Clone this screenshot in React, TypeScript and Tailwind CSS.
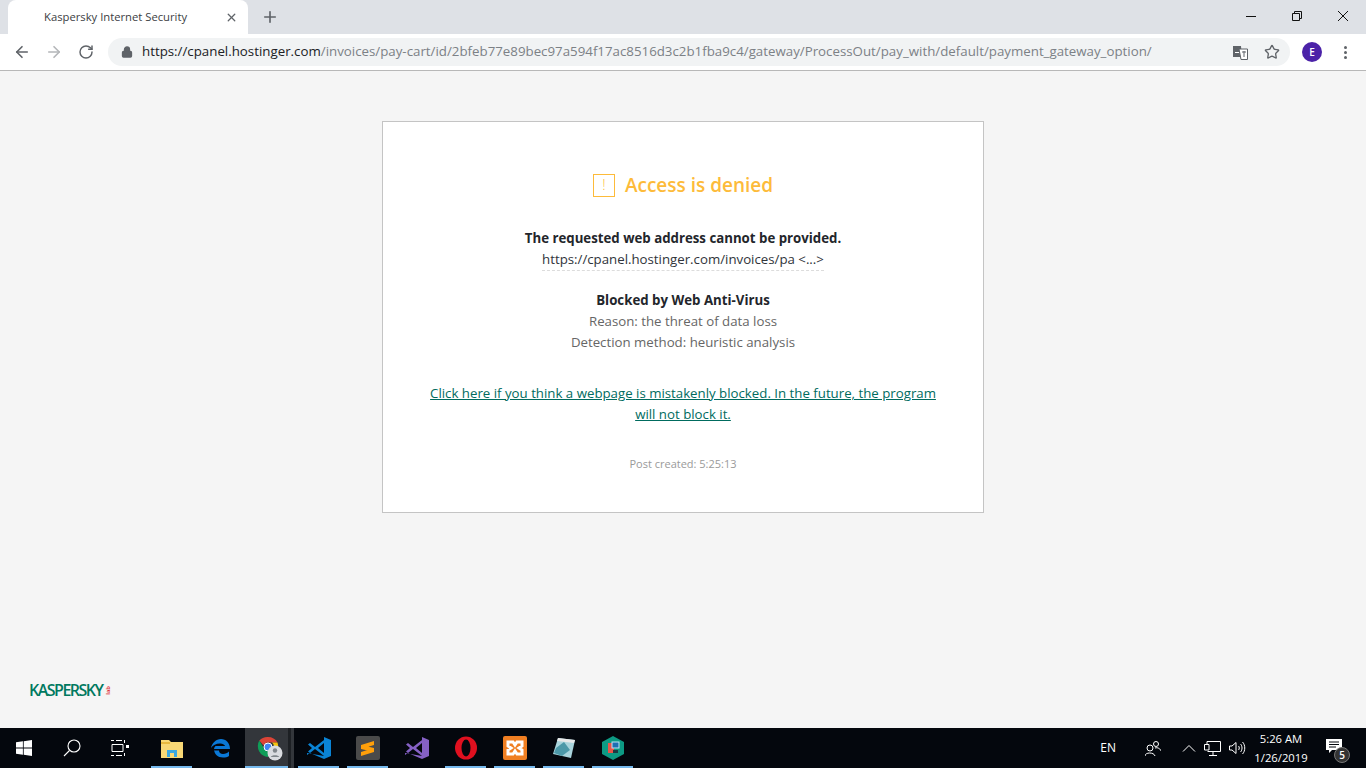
import { ArrowLeft, ArrowRight, Lock, Plus, RotateCw, Star, X } from 'lucide-react';

const ui = "font-['Open_Sans','Noto_Sans',sans-serif]";

function TaskbarButton({ open, active, children }: { open?: boolean; active?: boolean; children: React.ReactNode }) {
  return (
    <div className={`relative flex h-10 w-[49px] items-center justify-center ${active ? 'bg-[#33363b]' : ''}`}>
      {children}
      {active && <div className="absolute inset-y-0 right-[3px] w-[3px] bg-[#1d2024]" />}
      {open && <div className={`absolute bottom-0 h-[2px] bg-[#76b9ed] ${active ? 'left-0 right-[6px]' : 'inset-x-[4px]'}`} />}
    </div>
  );
}

function WindowsLogo() {
  return (
    <svg width="16" height="16" viewBox="0 0 16 16" fill="#fff">
      <path d="M0 2.300 6.900 1.300V7.600H0ZM7.700 1.200 16 0V7.600H7.700ZM0 8.400H6.900V14.700L0 13.700ZM7.700 8.400H16V16L7.700 14.800Z" />
    </svg>
  );
}

function ChromeLogo() {
  return (
    <svg width="26" height="26" viewBox="0 0 26 26">
      <path d="M11 2A11 11 0 0 1 20.500 7.500H11A5 5 0 0 0 6.500 10.500L2.300 5.500A11 11 0 0 1 11 2Z" fill="#db4437" />
      <path d="M20.500 7.500A11 11 0 0 1 12 22L16 14.500A5 5 0 0 0 15 7.500Z" fill="#f4c20d" />
      <path d="M2.300 5.500 7 13.500A5 5 0 0 0 13 16L11 22A11 11 0 0 1 2.300 5.500Z" fill="#0f9d58" />
      <circle cx="11" cy="12" r="4" fill="#4285f4" stroke="#fff" />
      <circle cx="18" cy="18" r="7.500" fill="#dadce0" />
      <circle cx="18" cy="15.500" r="2.200" fill="#80868b" />
      <path d="M13.800 22C14.500 19.500 21.500 19.500 22.200 22Z" fill="#80868b" />
    </svg>
  );
}

export default function App() {
  return (
    <div className={`flex h-screen w-full flex-col overflow-hidden ${ui}`}>
      {/* tab strip */}
      <div className="flex h-[34px] shrink-0 items-end bg-[#dee1e6]">
        <div className="ml-2 flex h-[34px] w-[240px] items-center rounded-t-lg bg-white pl-9 pr-[10px]">
          <span className="flex-1 text-[11.250px] text-[#3c4043]">Kaspersky Internet Security</span>
          <X size={13} strokeWidth={2.4} className="text-[#5f6368]" />
        </div>
        <div className="ml-[13px] flex h-[34px] items-center">
          <Plus size={18} strokeWidth={2.2} className="text-[#5f6368]" />
        </div>
        <div className="ml-auto flex h-[28px] self-start text-[#111]">
          <div className="flex w-[46px] items-center justify-center pt-1">
            <svg width="10" height="10" viewBox="0 0 10 10"><path d="M0 5.500H10" stroke="#111" /></svg>
          </div>
          <div className="flex w-[46px] items-center justify-center pt-1">
            <svg width="10" height="10" viewBox="0 0 10 10" fill="none" stroke="#111"><path d="M.5 2.500H7.500V9.500H.5ZM2.500 2.500V.5H9.500V7.500H7.500" /></svg>
          </div>
          <div className="flex w-[46px] items-center justify-center pt-1">
            <svg width="10" height="10" viewBox="0 0 10 10" stroke="#111"><path d="M0 0 10 10M10 0 0 10" /></svg>
          </div>
        </div>
      </div>

      {/* toolbar */}
      <div className="flex h-[37px] shrink-0 items-center border-b border-[#b8b8b8] bg-white">
        <div className="ml-[13px] flex items-center gap-[14px]">
          <ArrowLeft size={18} strokeWidth={2.2} className="text-[#5f6368]" />
          <ArrowRight size={18} strokeWidth={2.2} className="text-[#b4b6b9]" />
          <RotateCw size={16} strokeWidth={2.2} className="ml-px text-[#5f6368]" />
        </div>
        <div className="ml-[14px] flex h-7 w-[1182px] items-center rounded-full bg-[#f1f3f4] pl-[13px] pr-[10px]">
          <Lock size={12} strokeWidth={2.6} className="mr-[9px] text-[#5f6368]" fill="#5f6368" />
          <span className="flex-1 whitespace-nowrap text-[13.300px] text-[#7c8186]">
            <span className="text-[#202124]">https://cpanel.hostinger.com</span>
            /invoices/pay-cart/id/2bfeb77e89bec97a594f17ac8516d3c2b1fba9c4/gateway/ProcessOut/pay_with/default/payment_gateway_option/
          </span>
          <svg width="15" height="15" viewBox="0 0 15 15" className="mr-[16px]">
            <path d="M0 1H8L9 12H0Z" fill="#5f6368" />
            <path d="M6 4H14.500V14.500H8Z" fill="#fff" stroke="#5f6368" />
            <path d="M2 7.500H6" stroke="#fff" />
            <path d="M9 7H13M11 6V12" stroke="#5f6368" />
          </svg>
          <Star size={16} strokeWidth={2} className="text-[#5f6368]" />
        </div>
        <div className="ml-[12px] flex h-5 w-5 items-center justify-center rounded-full bg-[#4b22a8] text-[10px] font-semibold text-white">E</div>
        <div className="ml-[22px] flex flex-col gap-[2px]">
          <div className="h-[3px] w-[3px] rounded-full bg-[#5f6368]" />
          <div className="h-[3px] w-[3px] rounded-full bg-[#5f6368]" />
          <div className="h-[3px] w-[3px] rounded-full bg-[#5f6368]" />
        </div>
      </div>

      {/* blocked page */}
      <div className="relative flex flex-1 flex-col items-center justify-between bg-[#f5f5f5] pt-[50px]">
        <div className="flex h-[392px] w-[602px] flex-col items-center border border-[#c4c4c4] bg-white pt-[51px] text-center text-[13.250px] leading-[21px] text-[#666666]">
          <div className="flex h-6 items-center gap-[10px]">
            <div className="flex h-[23px] w-[22px] items-center justify-center border border-[#fdbb3a] text-[14px] leading-none font-light text-[#fdbb3a]">!</div>
            <h1 className="text-[19px] font-semibold text-[#fdbb3a]">Access is denied</h1>
          </div>
          <p className="mt-[31px] font-bold text-[#23262b]">The requested web address cannot be provided.</p>
          <p className="border-b border-dashed border-[#dcdcdc] text-[#30343a]">https://cpanel.hostinger.com/invoices/pa &lt;...&gt;</p>
          <p className="mt-[19px] font-bold text-[#23262b]">Blocked by Web Anti-Virus</p>
          <p>Reason: the threat of data loss</p>
          <p>Detection method: heuristic analysis</p>
          <a className="mt-[30px] block w-[520px] text-[#006b5e] underline">
            Click here if you think a webpage is mistakenly blocked. In the future, the program will not block it.
          </a>
          <p className="mt-[28px] text-[11px] text-[#9a9a9a]">Post created: 5:25:13</p>
        </div>
        <div className="mb-[30px] ml-[29px] flex items-center self-start">
          <span className="text-[16px] leading-4 font-semibold tracking-[-1.500px] text-[#00795f]">KASPERSKY</span>
          <span className="ml-[2px] font-['Liberation_Sans',sans-serif] text-[6px] leading-none font-bold text-[#e0383e] [writing-mode:vertical-rl] rotate-180">lab</span>
        </div>
      </div>

      {/* taskbar */}
      <div className="flex h-10 shrink-0 items-center bg-[#04070d] text-white">
        <div className="flex h-10 w-[48px] items-center justify-center"><WindowsLogo /></div>
        <div className="flex h-10 w-[48px] items-center justify-center">
          <svg width="18" height="18" viewBox="0 0 18 18" fill="none" stroke="#fff" strokeWidth="1.100"><circle cx="11" cy="7" r="6" /><path d="M6.500 11.500 1 17" /></svg>
        </div>
        <div className="flex h-10 w-[48px] items-center justify-center">
          <svg width="18" height="16" viewBox="0 0 18 16" fill="none" stroke="#fff"><path d="M0 .5H3M5 .5H11M0 15.500H3M5 15.500H11M1 4.500H12V11.500H1ZM13.500 0V3M13.500 13V16" /><rect x="15" y="5" width="3" height="3" fill="#fff" stroke="none" /></svg>
        </div>
        <div className="w-[3px]" />
        <TaskbarButton open>
          <svg width="22" height="20" viewBox="0 0 22 20"><path d="M0 2H8L10 4H22V20H0Z" fill="#f8d876" /><path d="M0 4H9V6H0Z" fill="#e8b93f" /><path d="M6 19V12H16V19H13V15H9V19Z" fill="#3aa7e0" /></svg>
        </TaskbarButton>
        <TaskbarButton>
          <svg width="20" height="20" viewBox="0 0 20 20" fill="none"><path d="M3 11H19C19 5 15 1 10 1 5 1 1 5 0 10 2 7 5 5.500 9 5.500 12 5.500 14 7 14 8H4.500C3.500 9 3 10 3 11Z" fill="#0a78d7" /><path d="M3 11C3 16 7 19.500 12 19.500 14.500 19.500 16.500 19 18 18V13.500C16.500 15 14.500 16 12 16 9.500 16 8 14.500 8 12.500H3Z" fill="#0a78d7" /></svg>
        </TaskbarButton>
        <TaskbarButton open active><ChromeLogo /></TaskbarButton>
        <TaskbarButton open>
          <svg width="24" height="24" viewBox="0 0 24 24"><path d="M17 1 24 4V20L17 23 3 17 0 19V17L17 20V4L8 11 3 7 1 8.500 5 12 1 15.500 3 17 8 13 17 20Z" fill="#0a84d6" /><path d="M17 7V17L11 12Z" fill="#04070d" /></svg>
        </TaskbarButton>
        <TaskbarButton open>
          <div className="flex h-6 w-6 items-center justify-center rounded-[2px] bg-[#4a4a4a]">
            <svg width="13" height="15" viewBox="0 0 13 15" fill="#ff9f0a"><path d="M13 0V4L0 8V4ZM13 7V11L0 15V11ZM0 4 13 7V11L0 8Z" /></svg>
          </div>
        </TaskbarButton>
        <TaskbarButton>
          <svg width="24" height="24" viewBox="0 0 24 24"><path d="M17 1 24 4V20L17 23 3 17 0 19V17L17 20V4L8 11 3 7 1 8.500 5 12 1 15.500 3 17 8 13 17 20Z" fill="#8661c5" /><path d="M17 7V17L11 12Z" fill="#04070d" /></svg>
        </TaskbarButton>
        <TaskbarButton open>
          <svg width="24" height="24" viewBox="0 0 24 24"><ellipse cx="12" cy="12" rx="11" ry="11.500" fill="#e0101f" /><ellipse cx="12" cy="12" rx="4.500" ry="8.500" fill="#04070d" /></svg>
        </TaskbarButton>
        <TaskbarButton open>
          <div className="flex h-6 w-6 items-center justify-center rounded-[2px] bg-[#f07f22]">
            <svg width="18" height="18" viewBox="0 0 18 18" fill="none" stroke="#fff" strokeWidth="3"><path d="M2 3H7L9 6 11 3H16V7L13 9 16 11V15H11L9 12 7 15H2V11L5 9 2 7Z" /></svg>
          </div>
        </TaskbarButton>
        <TaskbarButton open>
          <svg width="24" height="24" viewBox="0 0 24 24"><path d="M6 2 23 4 19 22 1 18Z" fill="#a9d4dc" /><path d="M6 2 23 4 22 7 5 5Z" fill="#e8e8e8" /><path d="M4 12 12 6 18 14 10 20 2 17Z" fill="#4c98a8" /></svg>
        </TaskbarButton>
        <TaskbarButton open>
          <svg width="22" height="24" viewBox="0 0 22 24"><path d="M11 0 22 6V18L11 24 0 18V6Z" fill="#0d9a84" /><rect x="6" y="7" width="6" height="10" fill="#e8554a" /><rect x="10" y="6" width="7" height="6" fill="#1f6fb2" stroke="#bfe3f3" /><rect x="11" y="14" width="5" height="3" fill="#1b3b44" /></svg>
        </TaskbarButton>

        {/* system tray */}
        <span className="ml-auto text-xs">EN</span>
        <svg width="16" height="16" viewBox="0 0 16 16" fill="none" stroke="#fff" className="ml-[29px]"><circle cx="5" cy="8" r="3" /><path d="M0 16C0 12 9 12 10 16" /><circle cx="11" cy="4" r="2.500" /><path d="M10 8C13 7 15.500 9 16 11" /></svg>
        <svg width="14" height="8" viewBox="0 0 14 8" fill="none" stroke="#fff" className="ml-[21px]"><path d="M1 7.500 7 1.500 13 7.500" /></svg>
        <svg width="17" height="15" viewBox="0 0 17 15" fill="none" stroke="#fff" className="ml-[8px]"><path d="M3 3V.5H16.500V10.500H3.500M0.500 3.500H5V9H0.500ZM9 10.500V14M5 14.500H13" /></svg>
        <svg width="17" height="14" viewBox="0 0 17 14" fill="none" stroke="#fff" className="ml-[8px]"><path d="M.5 5H3L7 1.500V12.500L3 9H.5ZM9.500 5C10.500 6 10.500 8 9.500 9M11.500 3C13.500 5 13.500 9 11.500 11M13.500 1C16.500 4 16.500 10 13.500 13" /></svg>
        <div className="ml-[1px] flex w-[68px] flex-col items-center pb-[1px] text-[11.250px] leading-[19px]">
          <span>5:26 AM</span>
          <span>1/26/2019</span>
        </div>
        <div className="relative ml-[11px] mr-[16px] flex h-10 w-[24px] items-center pb-[4px]">
          <svg width="16" height="15" viewBox="0 0 16 15" fill="#fff"><path d="M0 0H16V11H6L3 14V11H0Z" /><path d="M3 3H13M3 5.500H13M3 8H10" stroke="#04070d" /></svg>
          <div className="absolute bottom-[5px] right-0 flex h-[16px] w-[16px] items-center justify-center rounded-full border border-[#777] bg-[#333] text-[10px] font-semibold">5</div>
        </div>
      </div>
    </div>
  );
}
